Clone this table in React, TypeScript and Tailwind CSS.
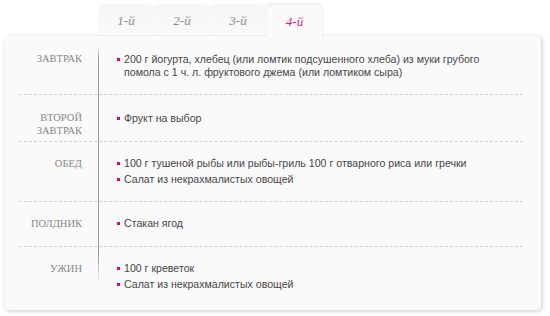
import React from "react";

const rows: {
  label: string[];
  items: string[];
  h: string;
  pt: string;
  lpt: string;
}[] = [
  {
    label: ["Завтрак"],
    items: [
      "200 г йогурта, хлебец (или ломтик подсушенного хлеба) из муки грубого помола с 1 ч. л. фруктового джема (или ломтиком сыра)",
    ],
    h: "h-[59px]",
    pt: "pt-[17px]",
    lpt: "pt-[16px]",
  },
  {
    label: ["Второй", "завтрак"],
    items: ["Фрукт на выбор"],
    h: "h-[47px]",
    pt: "pt-[17px]",
    lpt: "pt-[16px]",
  },
  {
    label: ["Обед"],
    items: [
      "100 г тушеной рыбы или рыбы-гриль 100 г отварного риса или гречки",
      "Салат из некрахмалистых овощей",
    ],
    h: "h-[60px]",
    pt: "pt-[15px]",
    lpt: "pt-[15px]",
  },
  {
    label: ["Полдник"],
    items: ["Стакан ягод"],
    h: "h-[45px]",
    pt: "pt-[15px]",
    lpt: "pt-[15px]",
  },
  {
    label: ["Ужин"],
    items: ["100 г креветок", "Салат из некрахмалистых овощей"],
    h: "h-[63px]",
    pt: "pt-[15px]",
    lpt: "pt-[15px]",
  },
];

const serif = { fontFamily: '"Liberation Serif", "DejaVu Serif", serif' };
const sans = { fontFamily: '"Liberation Sans", Arial, sans-serif' };

export default function App() {
  return (
    <div className="w-[550px] h-[316px] bg-white relative overflow-hidden">
      <div className="flex pl-[99px] h-[36px] items-end">
        {["1-й", "2-й", "3-й"].map((t) => (
          <div
            key={t}
            className="mr-[2px] w-[54px] h-[30px] mb-[1px] rounded-t-[4px] bg-gradient-to-b from-[#f5f5f5] to-[#fafafa] shadow-[0_0_2px_rgba(0,0,0,0.1)] flex items-center justify-center pt-[1px] text-[13px] italic text-[#8a8a8a]"
            style={serif}
          >
            {t}
          </div>
        ))}
        <div
          className="relative z-10 w-[55px] h-[33px] -mb-[2px] rounded-t-[4px] bg-[#fafafa] shadow-[0_-1px_3px_rgba(0,0,0,0.13)] flex items-start justify-center pt-[7px] text-[13px] italic text-[#e5187f]"
          style={serif}
        >
          4-й
        </div>
      </div>
      <div className="ml-[5px] w-[536px] h-[274px] rounded-[4px] bg-[#fafafa] shadow-[1px_1px_4px_rgba(0,0,0,0.22)] pl-[14px] pr-[18px]">
        {rows.map((r, i) => (
          <div
            key={i}
            className={
              "flex box-border " +
              r.h +
              (i < rows.length - 1 ? " border-b border-dashed border-[#d0d0d0]" : "")
            }
          >
            <div
              className={
                "w-[80px] shrink-0 relative pr-[17px] text-right uppercase text-[10.5px] leading-[13px] text-[#888] " +
                r.lpt
              }
              style={serif}
            >
              {r.label.map((l) => (
                <div key={l}>{l}</div>
              ))}
              <div
                className={
                  "absolute right-0 w-[1px] " +
                  (i === 0
                    ? "top-[10px] -bottom-[1px] bg-gradient-to-b from-[#fafafa] via-[#999] via-[25%] to-[#999]"
                    : i === 4
                    ? "top-0 h-[38px] bg-gradient-to-b from-[#888] to-[#fafafa]"
                    : "top-0 -bottom-[1px] bg-[#9a9a9a]")
                }
              />
            </div>
            <ul className={"flex-1 pl-[18px] flex flex-col gap-[3px] " + r.pt} style={sans}>
              {r.items.map((it) => (
                <li key={it} className="flex text-[10.6px] leading-[13px] text-[#474747]">
                  <span className="w-[3px] h-[3px] bg-[#e5007e] mt-[5px] mr-[4px] shrink-0" />
                  <span className="max-w-[380px]">{it}</span>
                </li>
              ))}
            </ul>
          </div>
        ))}
      </div>
    </div>
  );
}
